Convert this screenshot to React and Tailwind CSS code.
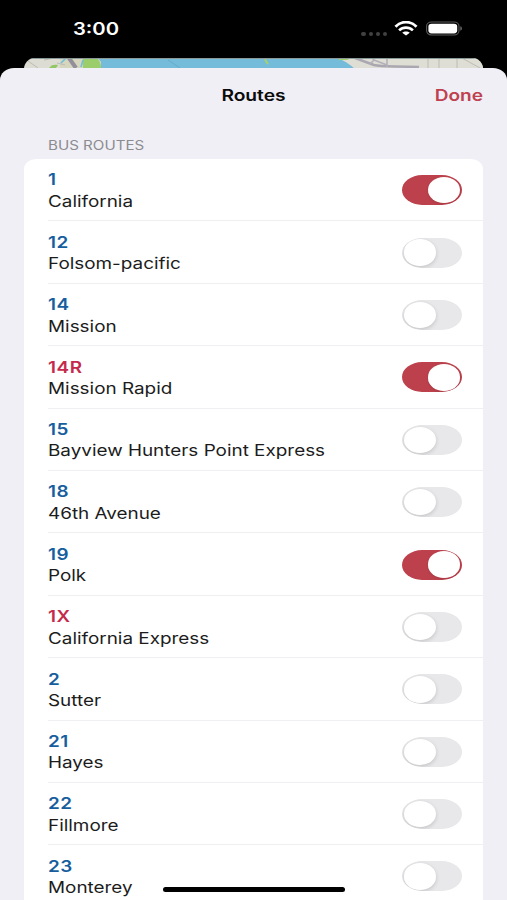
import { useState } from 'react';
import clsx from 'clsx';

const initialRoutes = [
  { id: '1', name: 'California', enabled: true },
  { id: '12', name: 'Folsom-pacific' },
  { id: '14', name: 'Mission' },
  { id: '14R', name: 'Mission Rapid', rapid: true, enabled: true },
  { id: '15', name: 'Bayview Hunters Point Express' },
  { id: '18', name: '46th Avenue' },
  { id: '19', name: 'Polk', enabled: true },
  { id: '1X', name: 'California Express', rapid: true },
  { id: '2', name: 'Sutter' },
  { id: '21', name: 'Hayes' },
  { id: '22', name: 'Fillmore' },
  { id: '23', name: 'Monterey' },
];

const StatusBar = () => (
  <div className="flex h-[58px] shrink-0 items-start justify-between pl-[73px] pr-[44.5px] text-white">
    <span className="mt-[18px] origin-left scale-x-[1.19] text-[17px] leading-[23px] font-semibold">3:00</span>

    <div className="mt-[21px] flex items-start">
      {/* No signal */}
      <div className="mt-[10.5px] flex gap-[2.8px]">
        {[0, 1, 2, 3].map((dot) => (
          <span key={dot} className="h-[4px] w-[4.3px] rounded-full bg-[#414141]" />
        ))}
      </div>

      {/* Wifi */}
      <svg className="ml-[7px] h-[15px] w-[24px]" viewBox="0 0 24 15" fill="none" stroke="currentColor">
        <path d="M1.5 5.7C7.2-.4 16.8-.4 22.5 5.7" strokeWidth="2.8" />
        <path d="M5.1 9.4C9 5.6 15 5.6 18.9 9.4" strokeWidth="2.7" />
        <path d="M12 14.6 8.2 11.7C10.2 10 13.8 10 15.8 11.7Z" fill="currentColor" stroke="none" />
      </svg>

      {/* Battery */}
      <svg className="ml-[7.5px] h-[15px] w-[37px]" viewBox="0 0 37 15">
        <rect x="0.6" y="1" width="32.4" height="13" rx="5" ry="4.2" fill="none" stroke="#5c5c5c" strokeWidth="1.1" />
        <rect x="2.4" y="2.7" width="28.8" height="9.7" rx="3.2" ry="2.8" fill="#fff" />
        <path d="M34.3 5.3C36.5 6 36.5 9 34.3 9.8Z" fill="#686868" />
      </svg>
    </div>
  </div>
);

const MapStrip = () => (
  <svg className="mx-auto -mb-[10px] block h-[20px] w-[459px] shrink-0 rounded-t-[11px]" viewBox="0 0 459 20">
    <rect width="459" height="20" fill="#dddcd2" />
    <path d="M38 0h360l-32 20H77Z" fill="#75bbda" />
    <path d="M36 0h38l3 4v16H36Z" fill="#d5d6bd" />
    <path d="M59 0h14c3 3 4 6 4 10H59Z" fill="#9bcd6b" />
    <path d="M25 10c2-3 5-4 9-3l-2 3Z" fill="#91c864" />
    <path d="M4 3l10 7M20 2l10-2M33 5l8 2" stroke="#bbbcb6" strokeWidth="1" />
    <path d="M45 0l7 10" stroke="#928e9c" strokeWidth="4" />
    <path d="M42 0l-5 5M59 2l-2 7" stroke="#72bddb" strokeWidth="1.6" />
    <path d="M144 2l12 8" stroke="#68aac8" strokeWidth="1" />
    <path d="M241 1c1 3 2 4 3 5" stroke="#a8d16c" strokeWidth="2" fill="none" />
    <path d="M314 0h145v20H337c-4-9-12-15-23-20Z" fill="#dfded4" />
    <path d="M314 0h14l-5 2h-8Z" fill="#a1ce6b" />
    <path d="M331 0l19 7c8 2 17 1 45 2" stroke="#aaa7b1" strokeWidth="2.4" fill="none" />
    <path d="M346 6l4-4-2-2M363 0v9M350 2l13 5" stroke="#b4b0ba" strokeWidth="1.6" fill="none" />
    <path d="M404 0v10M415 0v10M433 0v10M438 0l18 10" stroke="#bcbbb7" strokeWidth="1" />
    <path d="M0 .5h459" stroke="#8c9999" strokeWidth="1" />
  </svg>
);

const Toggle = ({ checked, onChange, label }) => (
  <button
    role="switch"
    aria-checked={checked}
    aria-label={label}
    onClick={onChange}
    className={clsx(
      'flex h-[30px] w-[60px] shrink-0 items-center overflow-hidden px-[1.8px] [border-radius:20px/15px]',
      checked ? 'justify-end bg-[#bd414c]' : 'justify-start bg-[#e8e8ea]'
    )}
  >
    <span
      className={clsx(
        'h-[26.4px] w-[32.4px] rounded-[50%] bg-white',
        checked ? 'shadow-[0_1px_3px_rgba(0,0,0,0.12)]' : 'shadow-[0_1.5px_4px_rgba(0,0,0,0.16)]'
      )}
    />
  </button>
);

const RouteRow = ({ route, isLast, onToggle }) => (
  <li className={clsx('ml-6 flex h-[62.4px] justify-between pr-[21px]', !isLast && 'border-b border-[#efeff1]')}>
    <div className="origin-left scale-x-[1.18] pt-[10.4px] text-[16px] leading-[21.4px] whitespace-nowrap">
      <div className={clsx('font-semibold tracking-[0.5px]', route.rapid ? 'text-[#c52a4d]' : 'text-[#165e9e]')}>{route.id}</div>
      <div className="text-[#1c1c1c]">{route.name}</div>
    </div>
    <div className="pt-[16.2px]">
      <Toggle checked={Boolean(route.enabled)} onChange={onToggle} label={route.name} />
    </div>
  </li>
);

const App = () => {
  const [routes, setRoutes] = useState(initialRoutes);

  const toggleRoute = (id) => {
    setRoutes(prev => prev.map(r => (r.id === id ? { ...r, enabled: !r.enabled } : r)));
  };

  return (
    <div className="relative flex h-[900px] w-[507px] flex-col overflow-hidden bg-black font-['Inter',sans-serif]">
      <StatusBar />
      <MapStrip />

      {/* Sheet */}
      <div className="relative min-h-0 flex-1 overflow-hidden bg-[#f0eff5] [border-radius:14px_14px_0_0/12px_12px_0_0]">
        <header className="grid h-[54px] grid-cols-3 items-center px-6 text-[16px] font-semibold">
          <h1 className="col-start-2 scale-x-[1.2] text-center text-[#0b0b0b]">Routes</h1>
          <button className="origin-right scale-x-[1.19] text-right text-[#bf404f]">Done</button>
        </header>

        <h2 className="mt-[15px] mb-[4px] ml-12 origin-left scale-x-[1.21] text-[12.5px] leading-[18px] text-[#8b8b90]">
          BUS ROUTES
        </h2>

        <ul className="mx-6 bg-white [border-radius:12px_12px_0_0/10px_10px_0_0]">
          {routes.map((route, index) => (
            <RouteRow
              key={route.id}
              route={route}
              isLast={index === routes.length - 1}
              onToggle={() => toggleRoute(route.id)}
            />
          ))}
        </ul>
      </div>

      {/* Home indicator */}
      <div className="absolute bottom-[8px] left-[163px] h-[5px] w-[182px] rounded-full bg-black" />
    </div>
  );
};

export default App;
